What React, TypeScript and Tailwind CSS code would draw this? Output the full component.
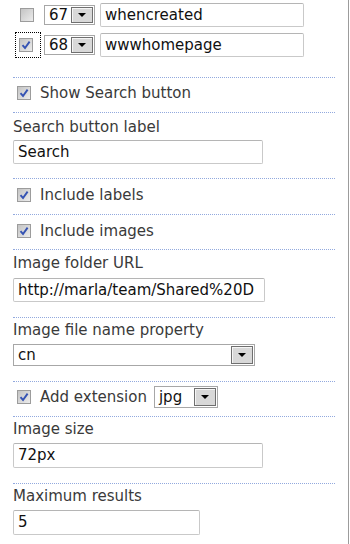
import type { ReactNode } from "react";

function Check({ checked }: { checked?: boolean }) {
  return (
    <span className="flex h-[14px] w-[14px] shrink-0 items-center justify-center border border-[#9c9c9c] bg-gradient-to-br from-[#c4c4c4] to-[#ececec]">
      {checked && (
        <svg width="10" height="10" viewBox="0 0 10 10">
          <path d="M1.5 5.2 L4 8 L8.6 1.6" fill="none" stroke="#3553b3" strokeWidth="1.9" />
        </svg>
      )}
    </span>
  );
}

function Arrow() {
  return (
    <span className="flex h-full w-[22px] shrink-0 items-center justify-center border border-[#6f6f6f] bg-[#d8d8d8] shadow-[inset_1px_1px_0_#f5f5f5]">
      <svg width="8" height="4" viewBox="0 0 8 4">
        <path d="M0 0h8L4 4z" fill="#000" />
      </svg>
    </span>
  );
}

function Select({ value, className }: { value: string; className: string }) {
  return (
    <div className={`flex items-center border border-[#a7a7a7] bg-white p-px ${className}`}>
      <span className="flex-1 whitespace-nowrap pl-[3px] leading-[18px] text-[#111]">{value}</span>
      <Arrow />
    </div>
  );
}

function Field({ value, className }: { value: string; className: string }) {
  return (
    <div className={`flex h-[24px] items-center whitespace-nowrap rounded-[2px] border border-[#c9c9c9] border-t-[#b5b5b5] bg-white pl-[4px] text-[#111] ${className}`}>
      {value}
    </div>
  );
}

function Section({ children, className = "" }: { children: ReactNode; className?: string }) {
  return <div className={`border-t border-dotted border-[#92a9de] ${className}`}>{children}</div>;
}

function CheckRow({ label, checked }: { label: string; checked?: boolean }) {
  return (
    <div className="flex h-4 items-center pl-1">
      <Check checked={checked} />
      <span className="ml-[9px]">{label}</span>
    </div>
  );
}

function Label({ text }: { text: string }) {
  return <div className="leading-[20px]">{text}</div>;
}

export default function App() {
  return (
    <div
      className="h-[544px] w-[349px] overflow-hidden border-r border-[#9c9c9c] bg-white text-[15px] text-[#3a3a3a]"
      style={{ fontFamily: '"DejaVu Sans", Verdana, sans-serif' }}
    >
      <div className="px-[13px]">
        {/* attribute rows */}
        <div className="flex flex-col gap-[6px] pt-[3px] pb-[20px]">
          <div className="flex h-6 items-center">
            <span className="ml-[2px] flex h-[26px] w-[26px] items-center pl-[5px]">
              <Check />
            </span>
            <Select value="67" className="ml-[3px] h-[20px] w-[51px]" />
            <Field value="whencreated" className="ml-[5px] w-[204px]" />
          </div>
          <div className="flex h-6 items-center">
            <span className="ml-[2px] flex h-[26px] w-[26px] items-center border border-dotted border-black pl-[3px]">
              <Check checked />
            </span>
            <Select value="68" className="ml-[3px] h-[20px] w-[51px]" />
            <Field value="wwwhomepage" className="ml-[5px] w-[204px]" />
          </div>
        </div>

        <Section className="pt-[7px] pb-[11px]">
          <CheckRow label="Show Search button" checked />
        </Section>

        <Section className="pt-[4px] pb-[14px]">
          <Label text="Search button label" />
          <Field value="Search" className="mt-[3px] w-[250px]" />
        </Section>

        <Section className="pt-[8px] pb-[11px]">
          <CheckRow label="Include labels" checked />
        </Section>

        <Section className="pt-[8px] pb-[10px]">
          <CheckRow label="Include images" checked />
        </Section>

        <Section className="pt-[3px] pb-[15px]">
          <Label text="Image folder URL" />
          <Field value="http://marla/team/Shared%20D" className="mt-[5px] w-[252px]" />
        </Section>

        <Section className="pt-[2px] pb-[15px]">
          <Label text="Image file name property" />
          <Select value="cn" className="mt-[4px] h-[22px] w-[242px]" />
        </Section>

        <Section className="pt-[4px] pb-[8px]">
          <div className="flex h-[22px] items-center pl-1">
            <Check checked />
            <span className="ml-[9px]">Add extension</span>
            <Select value="jpg" className="ml-[7px] h-[22px] w-[64px]" />
          </div>
        </Section>

        <Section className="pt-[2px] pb-[15px]">
          <Label text="Image size" />
          <Field value="72px" className="mt-[4px] h-[25px] w-[250px]" />
        </Section>

        <Section className="pt-[2px]">
          <Label text="Maximum results" />
          <Field value="5" className="mt-[4px] h-[25px] w-[187px]" />
        </Section>
      </div>
    </div>
  );
}
